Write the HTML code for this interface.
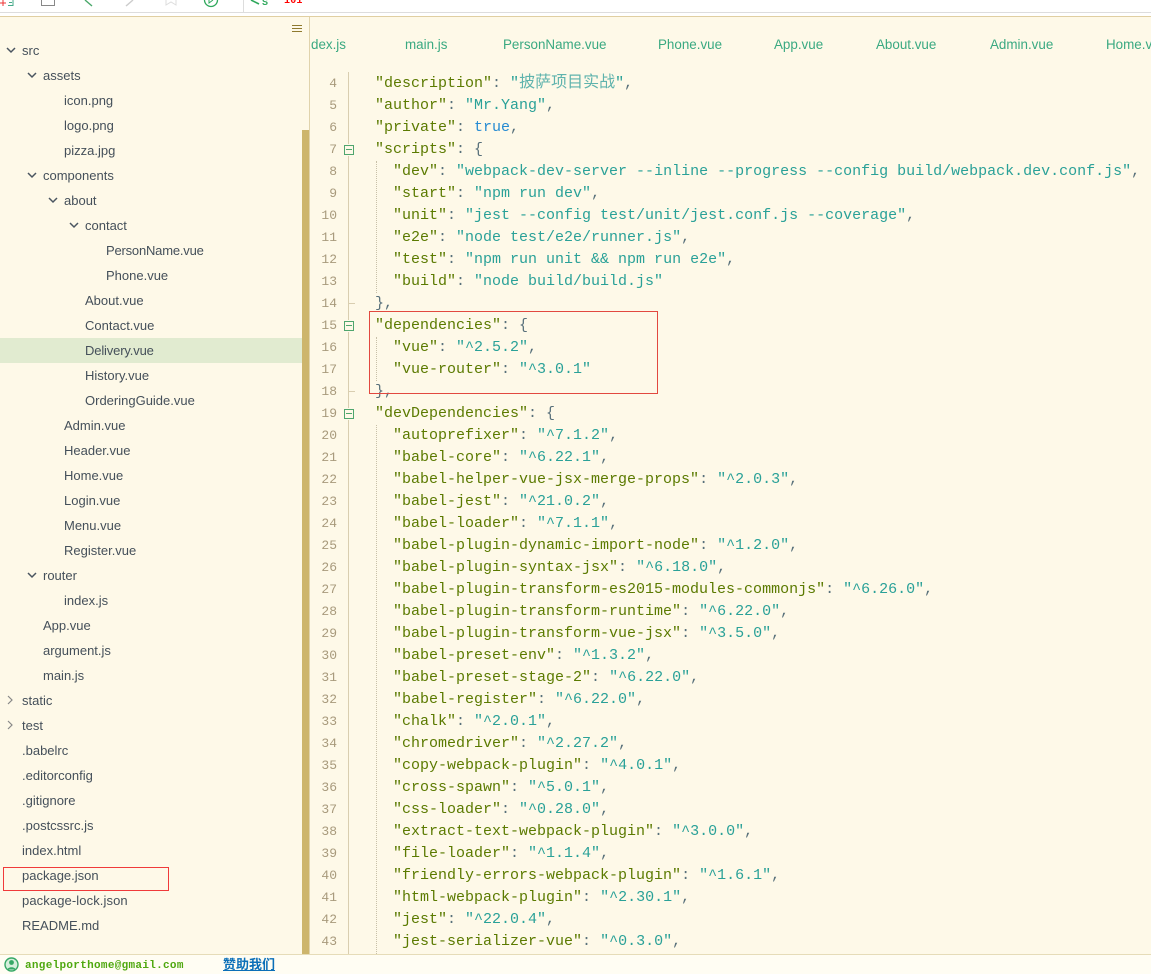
<!DOCTYPE html>
<html><head><meta charset="utf-8"><style>
html,body{margin:0;padding:0;width:1151px;height:974px;overflow:hidden;background:#fff}
div,span{box-sizing:border-box}
.a{position:absolute}
#side{position:absolute;left:0;top:17px;width:310px;height:937px;background:#fef9e8}
#main{position:absolute;left:310px;top:17px;width:841px;height:937px;background:#fef9e8}
.t{position:absolute;font:13px/25px "Liberation Sans","Noto Sans CJK SC",sans-serif;color:#45505a;white-space:nowrap;height:25px}
.tab{position:absolute;top:36px;font:13.4px/18px "Liberation Sans",sans-serif;color:#3aa981;white-space:nowrap}
.n{position:absolute;left:310px;width:27px;margin-top:1px;text-align:right;font:13px/22px "Liberation Mono",monospace;color:#a89a7c;height:22px}
.c{position:absolute;left:375px;margin-top:1px;font:15px/22px "Liberation Mono","Noto Sans CJK SC",monospace;color:#5b7a00;white-space:pre;height:22px}
.c i{font-style:normal;color:#2aa198}.c b{font-weight:normal;color:#58707a}.c u{text-decoration:none;color:#268bd2}
.c em{font-style:normal;font-size:16px;line-height:0;color:#5fb3ad}
.f{position:absolute;left:344px;width:10px;height:10px;border:1px solid #4fa66e}
.f:after{content:"";position:absolute;left:1px;top:3px;width:6px;height:1px;background:#4fa66e}
svg{position:absolute}
</style></head><body>
<div class="a" style="left:0;top:12px;width:1151px;height:1px;background:#ddd"></div>
<div class="a" style="left:243px;top:0;width:1px;height:13px;background:#ddd"></div>
<div class="a" style="left:0;top:16px;width:1151px;height:1px;background:#e0cfa2"></div>
<svg style="left:0;top:0" width="300" height="13" fill="none">
<path d="M0 3H6M3 0V6" stroke="#e33"/><path d="M8 5.5H13V0" stroke="#4a8"/><path d="M9 2.5H12" stroke="#4a8"/>
<path d="M41.5 0V5.5H54.5V0" stroke="#888"/>
<path d="M85 0L92 6" stroke="#4aa86a" stroke-width="1.4"/>
<path d="M126 6L133 0" stroke="#ccc" stroke-width="1.4"/>
<path d="M166 0V5L171 2L176 5V0" stroke="#ddd"/>
<circle cx="211" cy="0" r="6.5" stroke="#2fa85c" stroke-width="1.3"/><path d="M209 0V3L213 0" stroke="#2fa85c"/>
<path d="M251 0L259 4" stroke="#2fa85c" stroke-width="1.6"/>
</svg>
<div class="a" style="left:262px;top:-4px;font:bold 9px/12px 'Liberation Sans',sans-serif;color:#2fa85c">S</div>
<div class="a" style="left:284px;top:-4px;font:bold 10px/12px 'Liberation Mono',monospace;color:#f00;letter-spacing:.2px">101</div>

<div id="side"></div><div id="main"></div>
<div class="a" style="left:0;top:338px;width:302px;height:25px;background:#e1ebd0"></div>
<div class="a" style="left:302px;top:130px;width:7px;height:824px;background:#cdb56c"></div>
<div class="a" style="left:309px;top:17px;width:1px;height:937px;background:#e0d3ac"></div>
<div class="a" style="left:292px;top:25px;width:10px;height:1px;background:#8f7a2e;box-shadow:0 3px 0 #8f7a2e,0 6px 0 #8f7a2e"></div>

<div class="t" style="left:22px;top:38px">src</div>
<div class="t" style="left:43px;top:63px">assets</div>
<div class="t" style="left:64px;top:88px">icon.png</div>
<div class="t" style="left:64px;top:113px">logo.png</div>
<div class="t" style="left:64px;top:138px">pizza.jpg</div>
<div class="t" style="left:43px;top:163px">components</div>
<div class="t" style="left:64px;top:188px">about</div>
<div class="t" style="left:85px;top:213px">contact</div>
<div class="t" style="left:106px;top:238px;letter-spacing:-.2px">PersonName.vue</div>
<div class="t" style="left:106px;top:263px">Phone.vue</div>
<div class="t" style="left:85px;top:288px">About.vue</div>
<div class="t" style="left:85px;top:313px">Contact.vue</div>
<div class="t" style="left:85px;top:338px;letter-spacing:-.15px">Delivery.vue</div>
<div class="t" style="left:85px;top:363px">History.vue</div>
<div class="t" style="left:85px;top:388px">OrderingGuide.vue</div>
<div class="t" style="left:64px;top:413px">Admin.vue</div>
<div class="t" style="left:64px;top:438px">Header.vue</div>
<div class="t" style="left:64px;top:463px">Home.vue</div>
<div class="t" style="left:64px;top:488px">Login.vue</div>
<div class="t" style="left:64px;top:513px">Menu.vue</div>
<div class="t" style="left:64px;top:538px">Register.vue</div>
<div class="t" style="left:43px;top:563px">router</div>
<div class="t" style="left:64px;top:588px">index.js</div>
<div class="t" style="left:43px;top:613px">App.vue</div>
<div class="t" style="left:43px;top:638px">argument.js</div>
<div class="t" style="left:43px;top:663px">main.js</div>
<div class="t" style="left:22px;top:688px">static</div>
<div class="t" style="left:22px;top:713px">test</div>
<div class="t" style="left:22px;top:738px">.babelrc</div>
<div class="t" style="left:22px;top:763px">.editorconfig</div>
<div class="t" style="left:22px;top:788px">.gitignore</div>
<div class="t" style="left:22px;top:813px">.postcssrc.js</div>
<div class="t" style="left:22px;top:838px">index.html</div>
<div class="t" style="left:22px;top:863px">package.json</div>
<div class="t" style="left:22px;top:888px;letter-spacing:.1px">package-lock.json</div>
<div class="t" style="left:22px;top:913px">README.md</div>

<svg style="left:0;top:0" width="100" height="740" fill="none" stroke="#4a5560" stroke-width="1.5">
<path d="M7 48L11 52L15 48"/><path d="M28 73L32 77L36 73"/><path d="M28 173L32 177L36 173"/><path d="M49 198L53 202L57 198"/><path d="M70 223L74 227L78 223"/><path d="M28 573L32 577L36 573"/>
<path d="M8 696L12 700L8 704" stroke="#888" stroke-width="1.2"/><path d="M8 721L12 725L8 729" stroke="#888" stroke-width="1.2"/>
</svg>

<div class="a" style="left:3px;top:867px;width:166px;height:24px;border:1px solid #f03a3a"></div>

<div class="tab" style="left:311px">dex.js</div>
<div class="tab" style="left:405px">main.js</div>
<div class="tab" style="left:503px">PersonName.vue</div>
<div class="tab" style="left:658px">Phone.vue</div>
<div class="tab" style="left:774px">App.vue</div>
<div class="tab" style="left:876px">About.vue</div>
<div class="tab" style="left:990px">Admin.vue</div>
<div class="tab" style="left:1106px">Home.vue</div>

<div class="a" style="left:348px;top:72px;width:1px;height:882px;background:#d9ceb0"></div>
<div class="a" style="left:376px;top:161px;width:0;height:132px;border-left:1px dotted #c8c0a8"></div>
<div class="a" style="left:376px;top:337px;width:0;height:44px;border-left:1px dotted #c8c0a8"></div>
<div class="a" style="left:376px;top:425px;width:0;height:529px;border-left:1px dotted #c8c0a8"></div>
<div class="a" style="left:348px;top:303px;width:7px;height:1px;background:#d9ceb0"></div>
<div class="a" style="left:348px;top:391px;width:7px;height:1px;background:#d9ceb0"></div>
<div class="a" style="left:343px;top:144px;width:12px;height:12px;background:#fef9e8"></div>
<div class="a" style="left:343px;top:320px;width:12px;height:12px;background:#fef9e8"></div>
<div class="a" style="left:343px;top:408px;width:12px;height:12px;background:#fef9e8"></div>
<div class="f" style="top:145px"></div><div class="f" style="top:321px"></div><div class="f" style="top:409px"></div>

<div class="n" style="top:72px">4</div><div class="c" style="top:72px">"description"<b>: </b><i>"<em>披萨项目实战</em>"</i><b>,</b></div>
<div class="n" style="top:94px">5</div><div class="c" style="top:94px">"author"<b>: </b><i>"Mr.Yang"</i><b>,</b></div>
<div class="n" style="top:116px">6</div><div class="c" style="top:116px">"private"<b>: </b><u>true</u><b>,</b></div>
<div class="n" style="top:138px">7</div><div class="c" style="top:138px">"scripts"<b>: {</b></div>
<div class="n" style="top:160px">8</div><div class="c" style="top:160px">  "dev"<b>: </b><i>"webpack-dev-server --inline --progress --config build/webpack.dev.conf.js"</i><b>,</b></div>
<div class="n" style="top:182px">9</div><div class="c" style="top:182px">  "start"<b>: </b><i>"npm run dev"</i><b>,</b></div>
<div class="n" style="top:204px">10</div><div class="c" style="top:204px">  "unit"<b>: </b><i>"jest --config test/unit/jest.conf.js --coverage"</i><b>,</b></div>
<div class="n" style="top:226px">11</div><div class="c" style="top:226px">  "e2e"<b>: </b><i>"node test/e2e/runner.js"</i><b>,</b></div>
<div class="n" style="top:248px">12</div><div class="c" style="top:248px">  "test"<b>: </b><i>"npm run unit &amp;&amp; npm run e2e"</i><b>,</b></div>
<div class="n" style="top:270px">13</div><div class="c" style="top:270px">  "build"<b>: </b><i>"node build/build.js"</i></div>
<div class="n" style="top:292px">14</div><div class="c" style="top:292px"><b>},</b></div>
<div class="n" style="top:314px">15</div><div class="c" style="top:314px">"dependencies"<b>: {</b></div>
<div class="n" style="top:336px">16</div><div class="c" style="top:336px">  "vue"<b>: </b><i>"^2.5.2"</i><b>,</b></div>
<div class="n" style="top:358px">17</div><div class="c" style="top:358px">  "vue-router"<b>: </b><i>"^3.0.1"</i></div>
<div class="n" style="top:380px">18</div><div class="c" style="top:380px"><b>},</b></div>
<div class="n" style="top:402px">19</div><div class="c" style="top:402px">"devDependencies"<b>: {</b></div>
<div class="n" style="top:424px">20</div><div class="c" style="top:424px">  "autoprefixer"<b>: </b><i>"^7.1.2"</i><b>,</b></div>
<div class="n" style="top:446px">21</div><div class="c" style="top:446px">  "babel-core"<b>: </b><i>"^6.22.1"</i><b>,</b></div>
<div class="n" style="top:468px">22</div><div class="c" style="top:468px">  "babel-helper-vue-jsx-merge-props"<b>: </b><i>"^2.0.3"</i><b>,</b></div>
<div class="n" style="top:490px">23</div><div class="c" style="top:490px">  "babel-jest"<b>: </b><i>"^21.0.2"</i><b>,</b></div>
<div class="n" style="top:512px">24</div><div class="c" style="top:512px">  "babel-loader"<b>: </b><i>"^7.1.1"</i><b>,</b></div>
<div class="n" style="top:534px">25</div><div class="c" style="top:534px">  "babel-plugin-dynamic-import-node"<b>: </b><i>"^1.2.0"</i><b>,</b></div>
<div class="n" style="top:556px">26</div><div class="c" style="top:556px">  "babel-plugin-syntax-jsx"<b>: </b><i>"^6.18.0"</i><b>,</b></div>
<div class="n" style="top:578px">27</div><div class="c" style="top:578px">  "babel-plugin-transform-es2015-modules-commonjs"<b>: </b><i>"^6.26.0"</i><b>,</b></div>
<div class="n" style="top:600px">28</div><div class="c" style="top:600px">  "babel-plugin-transform-runtime"<b>: </b><i>"^6.22.0"</i><b>,</b></div>
<div class="n" style="top:622px">29</div><div class="c" style="top:622px">  "babel-plugin-transform-vue-jsx"<b>: </b><i>"^3.5.0"</i><b>,</b></div>
<div class="n" style="top:644px">30</div><div class="c" style="top:644px">  "babel-preset-env"<b>: </b><i>"^1.3.2"</i><b>,</b></div>
<div class="n" style="top:666px">31</div><div class="c" style="top:666px">  "babel-preset-stage-2"<b>: </b><i>"^6.22.0"</i><b>,</b></div>
<div class="n" style="top:688px">32</div><div class="c" style="top:688px">  "babel-register"<b>: </b><i>"^6.22.0"</i><b>,</b></div>
<div class="n" style="top:710px">33</div><div class="c" style="top:710px">  "chalk"<b>: </b><i>"^2.0.1"</i><b>,</b></div>
<div class="n" style="top:732px">34</div><div class="c" style="top:732px">  "chromedriver"<b>: </b><i>"^2.27.2"</i><b>,</b></div>
<div class="n" style="top:754px">35</div><div class="c" style="top:754px">  "copy-webpack-plugin"<b>: </b><i>"^4.0.1"</i><b>,</b></div>
<div class="n" style="top:776px">36</div><div class="c" style="top:776px">  "cross-spawn"<b>: </b><i>"^5.0.1"</i><b>,</b></div>
<div class="n" style="top:798px">37</div><div class="c" style="top:798px">  "css-loader"<b>: </b><i>"^0.28.0"</i><b>,</b></div>
<div class="n" style="top:820px">38</div><div class="c" style="top:820px">  "extract-text-webpack-plugin"<b>: </b><i>"^3.0.0"</i><b>,</b></div>
<div class="n" style="top:842px">39</div><div class="c" style="top:842px">  "file-loader"<b>: </b><i>"^1.1.4"</i><b>,</b></div>
<div class="n" style="top:864px">40</div><div class="c" style="top:864px">  "friendly-errors-webpack-plugin"<b>: </b><i>"^1.6.1"</i><b>,</b></div>
<div class="n" style="top:886px">41</div><div class="c" style="top:886px">  "html-webpack-plugin"<b>: </b><i>"^2.30.1"</i><b>,</b></div>
<div class="n" style="top:908px">42</div><div class="c" style="top:908px">  "jest"<b>: </b><i>"^22.0.4"</i><b>,</b></div>
<div class="n" style="top:930px">43</div><div class="c" style="top:930px">  "jest-serializer-vue"<b>: </b><i>"^0.3.0"</i><b>,</b></div>

<div class="a" style="left:369px;top:311px;width:289px;height:83px;border:1px solid #e2493f"></div>

<div class="a" style="left:0;top:954px;width:1151px;height:20px;background:#fffdf3;border-top:1px solid #e6dcb8"></div>
<svg style="left:4px;top:957px" width="15" height="15"><circle cx="7.5" cy="7.5" r="6.5" fill="#d6efdc" stroke="#36a866" stroke-width="1.4"/><circle cx="7.5" cy="5.5" r="2.4" fill="#36a866"/><path d="M3.5 12.5C4 9.5 11 9.5 11.5 12.5Z" fill="#36a866"/></svg>
<div class="a" style="left:25px;top:958px;font:bold 11px/16px 'Liberation Mono',monospace;color:#4fa80f;letter-spacing:.3px;white-space:nowrap">angelporthome@gmail.com</div>
<div class="a" style="left:223px;top:956px;font:bold 13px/17px 'Liberation Sans','Noto Sans CJK SC',sans-serif;color:#0b6fb8;text-decoration:underline;white-space:nowrap">赞助我们</div>
</body></html>
